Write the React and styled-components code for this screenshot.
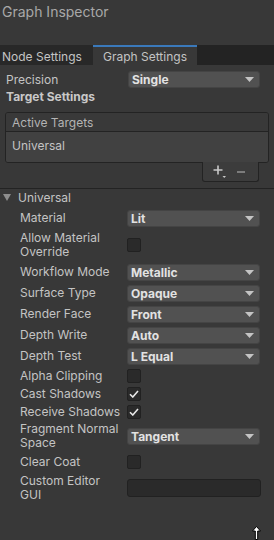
import React from 'react';
import styled, { createGlobalStyle } from 'styled-components';

const GlobalStyle = createGlobalStyle`
    html, body {
        margin: 0;
        padding: 0;
        background: #383838;
    }
    * {
        box-sizing: border-box;
    }
`;

// top = spacing above the row, as it sits in the Unity inspector
const settings = [
    { label: 'Material', type: 'dropdown', value: 'Lit', top: 3 },
    { label: 'Allow Material Override', type: 'checkbox', checked: false, top: 4 },
    { label: 'Workflow Mode', type: 'dropdown', value: 'Metallic', top: 4 },
    { label: 'Surface Type', type: 'dropdown', value: 'Opaque', top: 3 },
    { label: 'Render Face', type: 'dropdown', value: 'Front', top: 3 },
    { label: 'Depth Write', type: 'dropdown', value: 'Auto', top: 3 },
    { label: 'Depth Test', type: 'dropdown', value: 'L Equal', top: 3 },
    { label: 'Alpha Clipping', type: 'checkbox', checked: false, top: 2 },
    { label: 'Cast Shadows', type: 'checkbox', checked: true, top: 0 },
    { label: 'Receive Shadows', type: 'checkbox', checked: true, top: 0 },
    { label: 'Fragment Normal Space', type: 'dropdown', value: 'Tangent', top: 1 },
    { label: 'Clear Coat', type: 'checkbox', checked: false, top: 3 },
    { label: 'Custom Editor GUI', type: 'text', value: '', top: 3 },
];

const Arrow = () => (
    <svg width='9' height='5' viewBox='0 0 9 5'>
        <path d='M0 0 H9 L4.5 5 Z' fill='#c4c4c4' />
    </svg>
);

const Check = () => (
    <svg width='10' height='8' viewBox='0 0 10 8'>
        <path d='M1 4.2 L3.8 7 L9 1' fill='none' stroke='#e8e8e8' strokeWidth='1.6' />
    </svg>
);

const Dropdown = ({ value }) => (
    <Select>
        <span>{value}</span>
        <Arrow />
    </Select>
);

const Control = ({ item }) => {
    if (item.type === 'dropdown') return <Dropdown value={item.value} />;
    if (item.type === 'checkbox') return <Checkbox>{item.checked && <Check />}</Checkbox>;
    return <TextField />;
};

const App = () => {
    return (
        <Page>
            <GlobalStyle />
            <TitleBar>Graph Inspector</TitleBar>
            <TabBar>
                <Tab>Node Settings</Tab>
                <Tab $active>Graph Settings</Tab>
            </TabBar>
            <Content>
                <TopRow>
                    <TopLabel>Precision</TopLabel>
                    <Dropdown value='Single' />
                </TopRow>
                <SectionTitle>Target Settings</SectionTitle>
                <TargetList>
                    <ListHeader>Active Targets</ListHeader>
                    <ListBody>Universal</ListBody>
                </TargetList>
                <ListFooter>
                    <FooterButton>
                        <svg width='13' height='13' viewBox='0 0 13 13'>
                            <path d='M5 0.5 V9.5 M0.5 5 H9.5' stroke='#c8c8c8' strokeWidth='1.6' />
                            <path d='M9.5 11 H13 L11.25 13 Z' fill='#c8c8c8' />
                        </svg>
                    </FooterButton>
                    <FooterButton>
                        <svg width='10' height='10' viewBox='0 0 10 10'>
                            <path d='M1 5 H9' stroke='#8c8c8c' strokeWidth='1.6' />
                        </svg>
                    </FooterButton>
                </ListFooter>
                <Foldout>
                    <FoldoutHeader>
                        <svg width='8' height='7' viewBox='0 0 8 7'>
                            <path d='M0 0 H8 L4 7 Z' fill='#8e8e8e' />
                        </svg>
                        <span>Universal</span>
                    </FoldoutHeader>
                    {settings.map(item => (
                        <Row key={item.label} $top={item.top}>
                            <Label>{item.label}</Label>
                            <Control item={item} />
                        </Row>
                    ))}
                </Foldout>
            </Content>
            <Cursor>
                <svg width='9' height='14' viewBox='0 0 9 14'>
                    <path d='M4.5 0.5 L8.5 5 H5.7 V13.5 H3.3 V5 H0.5 Z' fill='#ffffff' stroke='#000000' strokeWidth='1' />
                </svg>
            </Cursor>
        </Page>
    );
};

export default App;

const Page = styled.div`
    position: relative;
    width: 274px;
    height: 540px;
    overflow: hidden;
    background: #383838;
    font-family: 'Inter', 'Noto Sans', sans-serif;
    font-size: 12px;
    color: #c4c4c4;
`;

const TitleBar = styled.div`
    height: 45px;
    padding: 3px 0 0 2px;
    font-size: 14px;
    line-height: 18px;
    color: #a8a8a8;
`;

const TabBar = styled.div`
    display: flex;
    height: 20px;
    background: #232323;
`;

const Tab = styled.div`
    display: flex;
    align-items: center;
    width: ${p => (p.$active ? '104px' : '93px')};
    padding: 0 0 0 ${p => (p.$active ? '10px' : '2px')};
    border-top: 2px solid ${p => (p.$active ? '#3a79bb' : 'transparent')};
    background: ${p => (p.$active ? '#383838' : '#282828')};
    color: #c4c4c4;
    white-space: nowrap;
`;

const Content = styled.div`
    padding-top: 5px;
`;

const TopRow = styled.div`
    display: flex;
    align-items: center;
    height: 18px;
    padding: 0 14px 0 6px;
`;

const TopLabel = styled.div`
    width: 122px;
`;

const SectionTitle = styled.div`
    height: 16px;
    margin-top: 1px;
    padding-left: 6px;
    font-weight: 700;
    line-height: 16px;
    color: #c8c8c8;
`;

const TargetList = styled.div`
    margin: 7px 5px 0 5px;
    border: 1px solid #232323;
    border-radius: 3px;
    overflow: hidden;
`;

const ListHeader = styled.div`
    height: 19px;
    padding-left: 6px;
    line-height: 19px;
    background: #393939;
    border-bottom: 1px solid #232323;
    color: #b4b4b4;
`;

const ListBody = styled.div`
    height: 30px;
    padding-left: 6px;
    line-height: 28px;
    background: #414141;
    color: #c4c4c4;
`;

const ListFooter = styled.div`
    display: flex;
    align-items: center;
    justify-content: space-around;
    width: 57px;
    height: 20px;
    margin: -1px 15px 0 auto;
    padding: 0 6px;
    background: #3c3c3c;
    border: 1px solid #232323;
    border-top: none;
    border-radius: 0 0 3px 3px;
`;

const FooterButton = styled.div`
    display: flex;
    align-items: center;
    justify-content: center;
    width: 16px;
    height: 16px;
`;

const Foldout = styled.div`
    margin-top: 6px;
    border-top: 1px solid #232323;
`;

const FoldoutHeader = styled.div`
    display: flex;
    align-items: center;
    gap: 7px;
    height: 17px;
    padding-left: 3px;
    color: #c4c4c4;
`;

const Row = styled.div`
    display: flex;
    align-items: center;
    min-height: 18px;
    margin-top: ${p => p.$top}px;
    padding: 0 14px 0 20px;
`;

const Label = styled.div`
    width: 107px;
    flex-shrink: 0;
    padding-right: 4px;
    line-height: 14px;
    color: #c4c4c4;
`;

const Select = styled.div`
    display: flex;
    align-items: center;
    justify-content: space-between;
    flex: 1;
    height: 17px;
    padding: 0 5px 0 3px;
    background: #515151;
    border: 1px solid #444444;
    border-radius: 3px;
    font-weight: 700;
    color: #e2e2e2;
`;

const Checkbox = styled.div`
    display: flex;
    align-items: center;
    justify-content: center;
    width: 14px;
    height: 14px;
    background: #2a2a2a;
    border: 1px solid #212121;
    border-radius: 2px;
`;

const TextField = styled.div`
    flex: 1;
    height: 18px;
    margin-right: -1px;
    background: #2a2a2a;
    border: 1px solid #212121;
    border-radius: 3px;
`;

const Cursor = styled.div`
    position: absolute;
    left: 252px;
    top: 526px;
    line-height: 0;
`;
